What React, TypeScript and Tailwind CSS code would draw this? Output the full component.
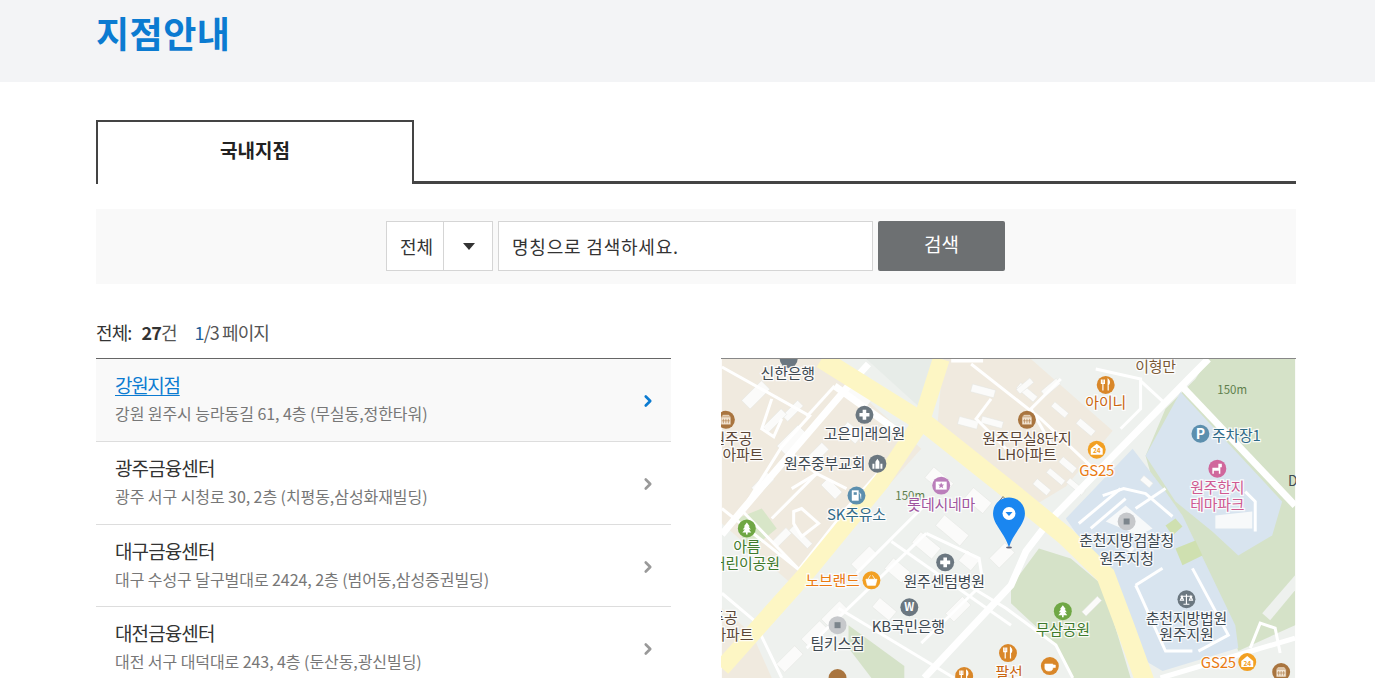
import { ChevronRight } from "lucide-react";

const branches = [
  { name: "강원지점", addr: "강원 원주시 능라동길 61, 4층 (무실동,정한타워)", active: true, h: "h-[83px]" },
  { name: "광주금융센터", addr: "광주 서구 시청로 30, 2층 (치평동,삼성화재빌딩)", active: false, h: "h-[83px]" },
  { name: "대구금융센터", addr: "대구 수성구 달구벌대로 2424, 2층 (범어동,삼성증권빌딩)", active: false, h: "h-[82px]" },
  { name: "대전금융센터", addr: "대전 서구 대덕대로 243, 4층 (둔산동,광신빌딩)", active: false, h: "h-[83px]" },
];

// [label, x, y, colour] in map coordinates
const labels: [string, number, number, string][] = [
  ["신한은행", 66, 20, "#3f4a52"],
  ["고은미래의원", 143, 80, "#3f4a52"],
  ["원주공", 10, 85, "#5b4636"],
  ["아파트", 21, 101, "#5b4636"],
  ["원주중부교회", 103, 110, "#3f4a52"],
  ["SK주유소", 135, 162, "#2f6a88"],
  ["롯데시네마", 220, 151, "#a0559f"],
  ["아름", 25, 194, "#3f7a2c"],
  ["어린이공원", 24, 211, "#3f7a2c"],
  ["노브랜드", 111, 228, "#ea7a12"],
  ["원주센텀병원", 223, 229, "#3f4a52"],
  ["KB국민은행", 187, 274, "#3f4a52"],
  ["주공", 2, 265, "#5b4636"],
  ["아파트", 11, 282, "#5b4636"],
  ["팀키스짐", 116, 291, "#3f4a52"],
  ["팔선", 288, 320, "#c9640e"],
  ["이형만", 435, 13, "#7a5a36"],
  ["아이니", 385, 49, "#c9640e"],
  ["원주무실8단지", 306, 85, "#5b4636"],
  ["LH아파트", 306, 101, "#5b4636"],
  ["GS25", 376, 117, "#ea7a12"],
  ["주차장1", 516, 82, "#2f6a88"],
  ["원주한지", 497, 134, "#cf5a92"],
  ["테마파크", 497, 151, "#cf5a92"],
  ["춘천지방검찰청", 406, 188, "#3f4a52"],
  ["원주지청", 406, 206, "#3f4a52"],
  ["무삼공원", 342, 277, "#3f7a2c"],
  ["춘천지방법원", 466, 266, "#3f4a52"],
  ["원주지원", 466, 282, "#3f4a52"],
  ["GS25", 498, 310, "#ea7a12"],
];

type Kind = "none" | "cross" | "grid" | "church" | "gas" | "star" | "tree" | "basket" | "won" | "dot" | "fork" | "store" | "p" | "horse" | "scale" | "cup";

// [x, y, colour, icon] round map markers
const markers: [number, number, string, Kind][] = [
  [67, 0, "#6b7780", "none"],
  [143, 56, "#6b7780", "cross"],
  [4, 61, "#a9753f", "grid"],
  [156, 105, "#6b7780", "church"],
  [135, 137, "#5c8fae", "gas"],
  [220, 127, "#bb7fbb", "star"],
  [25, 170, "#6fa744", "tree"],
  [150, 222, "#f2a023", "basket"],
  [224, 204, "#6b7780", "cross"],
  [188, 249, "#6b7780", "won"],
  [116, 267, "#c6c8cb", "dot"],
  [116, 320, "#a9753f", "none"],
  [243, 318, "#d98729", "fork"],
  [287, 295, "#d98729", "fork"],
  [385, 26, "#d98729", "fork"],
  [306, 61, "#a9753f", "grid"],
  [376, 91, "#f2a023", "store"],
  [480, 75, "#5c8fae", "p"],
  [497, 110, "#d0679c", "horse"],
  [406, 163, "#c6c8cb", "dot"],
  [342, 253, "#6fa744", "tree"],
  [466, 241, "#6b7780", "scale"],
  [329, 308, "#d98729", "cup"],
  [527, 304, "#f2a023", "store"],
  [561, 314, "#a9753f", "grid"],
];

function MarkerIcon({ kind }: { kind: Kind }) {
  const w = { fill: "none", stroke: "#fff", strokeWidth: 1.2 };
  switch (kind) {
    case "cross":
      return <path d="M-1.8 -5H1.8V-1.8H5V1.8H1.8V5H-1.8V1.8H-5V-1.8H-1.8Z" fill="#fff" />;
    case "grid":
      return <path d="M-5 -3H5V5H-5ZM-5 -3L-3 -5H3L5 -3M-2.5 -1V3.5M0 -1V3.5M2.5 -1V3.5M-4 1H4" fill="#f3e6d4" stroke="#a9753f" strokeWidth="0.6" />;
    case "church":
      return <path d="M-5 5V0H-3V5ZM-2 5V-2L0 -5L2 -2V5ZM3 5V0H5V5Z" fill="#fff" />;
    case "gas":
      return <path d="M-4.5 5V-5H2V5ZM-3 -3.5V-0.5H0.5V-3.5ZM3 -3L4.5 -1V3.5" fill="#fff" stroke="#fff" strokeWidth="0.4" fillRule="evenodd" />;
    case "star":
      return (
        <g>
          <rect x="-5.5" y="-4" width="11" height="8" fill="#fff" />
          <path d="M0 -3L1 -1H3L1.4 0.4L2 2.6L0 1.3L-2 2.6L-1.4 0.4L-3 -1H-1Z" fill="#bb7fbb" />
        </g>
      );
    case "tree":
      return <path d="M0 -6L3 -2H1.8L4 1H2L4.5 4H0.8V6H-0.8V4H-4.5L-2 1H-4L-1.8 -2H-3Z" fill="#fff" />;
    case "basket":
      return <path d="M-5.5 -1H5.5L4 5H-4ZM-3.5 -1L-1 -5M3.5 -1L1 -5" fill="#fff" stroke="#fff" strokeWidth="0.8" />;
    case "won":
      return <text y="4" textAnchor="middle" fontSize="11" fontWeight="700" fill="#fff">W</text>;
    case "dot":
      return <rect x="-3" y="-3" width="6" height="6" fill="#7c858c" />;
    case "fork":
      return <path d="M-2.8 -5.5V5.5M-4.3 -5.5V-1.5H-1.3V-5.5M2.5 5.5V-5.5C4.2 -4 4.2 -1 2.5 0" {...w} />;
    case "store":
      return (
        <g>
          <path d="M-6 -1L0 -6L6 -1V5H-6Z" fill="#fff" />
          <text y="3.5" textAnchor="middle" fontSize="6.5" fontWeight="700" fill="#f2a023">24</text>
        </g>
      );
    case "p":
      return <text y="5" textAnchor="middle" fontSize="14" fontWeight="700" fill="#fff">P</text>;
    case "horse":
      return <path d="M-5 5V-1H1V-5H4.5V-1.5H3V5H1.5V2H-3.5V5Z" fill="#fff" />;
    case "scale":
      return <path d="M-6 -3H6M0 -5V5M-3 5H3M-4.5 -3L-6 1H-3ZM4.5 -3L3 1H6Z" {...w} />;
    case "cup":
      return <path d="M-5 -2H3V2C3 4 1.5 5 -1 5C-3.5 5 -5 4 -5 2ZM3 -1H5.5V1.5H3" fill="#fff" stroke="#fff" strokeWidth="0.6" />;
    default:
      return null;
  }
}

const whiteRoads = [
  "M0 176 L20 152 L127 27 L147 5",
  "M113 27 L187 80",
  "M203 320 L290 227 L305 193 L328 163 L468 20 L488 0",
  "M462 28 L575 147",
  "M262 0 L230 0",
];

const thinRoads = [
  "M0 8 L88 57 L60 88 L20 152",
  "M20 152 L78 212 L0 150",
  "M113 27 L85 58",
  "M187 80 L125 150 L78 210",
  "M170 183 L290 267",
  "M117 250 L233 320",
  "M135 215 L205 145",
  "M85 290 L205 175",
  "M205 175 L258 200 L262 225 L200 285",
  "M247 227 L285 250 L335 287 L352 320",
  "M0 235 L32 262 L60 320",
  "M250 5 L320 60 L378 115",
  "M340 20 L310 50 L330 85",
  "M375 10 L420 20 L420 50 L400 70",
  "M420 22 L445 45",
  "M270 40 L255 60 L285 90",
  "M50 160 L95 115 L125 130",
  "M70 130 L95 115 L70 95",
  "M72 153 L80 150 L97 165 L80 178 L72 165Z",
  "M50 40 L40 70 L52 78 L60 60",
  "M382 137 L403 130 L425 135 L452 158",
  "M358 165 L400 130",
  "M370 170 L405 140",
  "M415 150 L445 130",
  "M415 227 L442 210",
  "M415 227 L418 233 L445 293 L472 293",
  "M472 210 L508 277 L478 293",
  "M525 133 L535 143 L535 173",
  "M530 290 L540 265 L555 270 L560 295",
];

const buildings: [number, number, number, number, number][] = [
  [20, 30, 28, 12, -45], [55, 75, 30, 12, -45], [30, 120, 22, 10, -45], [85, 90, 22, 10, -45],
  [60, 48, 22, 8, -45], [40, 58, 26, 8, -45], [125, 30, 26, 12, 40], [120, 68, 20, 12, 40],
  [205, 115, 26, 14, 40], [215, 165, 32, 14, 40], [192, 180, 26, 14, 40], [152, 245, 22, 12, 40],
  [165, 205, 22, 14, 40], [130, 195, 26, 12, -45], [100, 250, 26, 12, -45], [80, 270, 26, 12, -45],
  [55, 295, 26, 12, -45], [245, 135, 24, 14, 40], [270, 190, 22, 14, -45], [225, 245, 24, 12, -45],
  [240, 195, 16, 14, 40], [100, 125, 20, 10, 45], [120, 145, 24, 8, -45], [50, 175, 20, 8, -45],
  [295, 30, 22, 7, 40], [345, 125, 20, 6, 40], [325, 115, 20, 6, 40], [330, 48, 18, 6, 40],
  [260, 60, 22, 7, 15], [320, 25, 20, 7, -40], [355, 65, 20, 7, 40], [420, 120, 12, 6, 40],
  [400, 185, 14, 6, 40], [360, 245, 22, 6, -45], [250, 28, 24, 8, 15], [237, 60, 20, 8, 15],
  [338, 103, 18, 7, 40], [312, 125, 18, 7, 40], [295, 24, 18, 6, -40], [66, 175, 26, 7, 45],
];

function MapView() {
  return (
    <svg viewBox="0 0 575 320" className="block h-full w-full" style={{ fontFamily: "'Noto Sans CJK KR', sans-serif" }}>
      <rect width="575" height="320" fill="#eef1ee" />
      {/* land use */}
      <path d="M0 0H100L200 90L75 230L0 165Z" fill="#f0eadf" />
      <path d="M0 250L30 275L50 320H0Z" fill="#f0eadf" />
      <path d="M222 0H310L392 72L345 128L300 155L215 80Z" fill="#f0eadf" />
      <path d="M145 0H216L200 50Z" fill="#e7ece8" />
      <path d="M475 20L488 0H575V267L518 293L495 230L440 150L425 97L445 50Z" fill="#d5e2c8" />
      <path d="M290 228L318 190L350 200L382 227L410 320H352L335 287L290 245Z" fill="#d5e2c8" />
      <path d="M412 90L345 160L385 217L420 300L442 313L518 290L515 267L462 157L445 133Z" fill="#d8e4ef" />
      <path d="M460 33L425 97L455 143L492 173L518 197L552 177L562 143Z" fill="#d8e4ef" />
      <path d="M127 267L183 308V320H150L127 290Z" fill="#d5e2c8" />
      <path d="M15 160L40 150L55 170L25 195Z" fill="#d8e6c8" />
      {/* buildings */}
      {buildings.map(([x, y, w, h, r], i) => (
        <rect key={i} x={x} y={y} width={w} height={h} fill="#fbfbfa" stroke="#e3e5e1" strokeWidth="0.5" transform={`rotate(${r} ${x + w / 2} ${y + h / 2})`} />
      ))}
      <path d="M495 157L532 153L532 170L495 170Z" fill="#f7f9fa" />
      <path d="M385 163L405 147L432 170L418 177Z" fill="#f7f9fa" />
      <path d="M445 167L455 160L462 168L452 177Z" fill="#cfe0b0" />
      <path d="M455 190L475 182L482 197L462 207Z" fill="#cfe0b0" />
      <path d="M542 255L575 217V232L550 262Z" fill="#eef1ee" />
      {/* roads */}
      {thinRoads.map((d) => (
        <path key={d} d={d} fill="none" stroke="#fff" strokeWidth="3" />
      ))}
      {whiteRoads.map((d) => (
        <path key={d} d={d} fill="none" stroke="#fff" strokeWidth="7" />
      ))}
      <path d="M440 320L575 280" fill="none" stroke="#fff" strokeWidth="5" />
      <path d="M0 310L83 217L160 123L200 63L220 0" fill="none" stroke="#fdf6c4" strokeWidth="17" />
      <path d="M100 0L207 67L290 133L345 178L385 217L405 270L425 325" fill="none" stroke="#fdf6c4" strokeWidth="19" />
      {/* markers */}
      {markers.map(([x, y, c, k], i) => (
        <g key={i} transform={`translate(${x} ${y})`}>
          <circle r="9" fill={c} />
          <MarkerIcon kind={k} />
        </g>
      ))}
      {/* labels */}
      <text x="174" y="141" fontSize="11.5" fill="#5f7f4c">150m</text>
      <text x="497" y="35" fontSize="11.5" fill="#5f7f4c">150m</text>
      <text x="568" y="127" fontSize="14" fill="#3f4a52">D</text>
      {labels.map(([t, x, y, c], i) => (
        <text key={i} x={x} y={y} textAnchor="middle" fontSize="15" letterSpacing="-0.2" fill={c} stroke="#fff" strokeWidth="2.5" strokeOpacity="0.85" style={{ paintOrder: "stroke" }}>{t}</text>
      ))}
      {/* pin */}
      <path d="M278 143L282 138L290 146L298 150" fill="none" stroke="#555" strokeWidth="0.8" />
      <path d="M288 189C284 175 272 166 272 155C272 146 279 139 288 139C297 139 304 146 304 155C304 166 292 175 288 189Z" fill="#1a86f0" />
      <circle cx="288" cy="155" r="6.5" fill="#fff" />
      <path d="M284.5 153.5H291.5L288 157.5Z" fill="#1a86f0" />
      <ellipse cx="288" cy="189" rx="3" ry="1" fill="#667" />
    </svg>
  );
}

export default function App() {
  return (
    <div className="h-[678px] overflow-hidden bg-white font-['Noto_Sans_CJK_KR',sans-serif] text-[#333]">
      <header className="h-[82px] bg-[#f3f4f6] pl-[96px]">
        <h1 className="pt-[6px] text-[36px] font-bold leading-[52px] tracking-[0.5px] text-[#0b7bd1]">지점안내</h1>
      </header>

      <main className="ml-[96px] w-[1200px]">
        {/* tabs */}
        <div className="mt-[38px] flex h-[64px] border-b-[3px] border-[#444]">
          <div className="-mb-[3px] flex h-[64px] w-[318px] items-center justify-center border-x-2 border-t-2 border-[#444] bg-white pb-[6px] text-[19px] font-bold text-[#222]">
            국내지점
          </div>
        </div>

        {/* search */}
        <div className="mt-[25px] flex h-[75px] items-start justify-center bg-[#f9f9f9] pr-px pt-[12px] text-[18px] tracking-[0.8px] text-[#333]">
          <div className="flex h-[50px] w-[107px] border border-[#d5d5d5] bg-white">
            <span className="flex w-[57px] items-center justify-center border-r border-[#d5d5d5] pl-[3px] tracking-normal">전체</span>
            <span className="flex flex-1 items-center justify-center pl-[2px]">
              <span className="h-0 w-0 border-x-[6px] border-t-[7px] border-x-transparent border-t-[#333]" />
            </span>
          </div>
          <div className="ml-[5px] flex h-[50px] w-[375px] items-center border border-[#d5d5d5] bg-white pl-[13px]">
            명칭으로 검색하세요.
          </div>
          <button className="ml-[5px] h-[50px] w-[127px] rounded-[2px] bg-[#6d7072] pb-[4px] text-[19px] tracking-normal text-white">검색</button>
        </div>

        {/* count */}
        <div className="mt-[33px] flex h-[30px] items-center text-[18px] tracking-[-0.9px] text-[#555]">
          <span className="text-[#333]">전체:</span>
          <span className="ml-[10px] font-bold text-[#333]">27</span>
          <span>건</span>
          <span className="ml-[18px] text-[#1f5f9a]">1</span>
          <span>/3 페이지</span>
        </div>

        <div className="mt-[11px] flex items-start justify-between">
          <ul className="w-[575px] border-t border-[#666]">
            {branches.map((b) => (
              <li
                key={b.name}
                className={`flex items-center justify-between border-b border-[#ddd] pb-[4px] pl-[19px] pr-[14px] ${b.h} ${b.active ? "bg-[#f9f9f9]" : "bg-white"}`}
              >
                <div>
                  <div className={`text-[19px] leading-[30px] ${b.active ? "tracking-[-1.3px] text-[#0b7bd1] underline underline-offset-2" : "tracking-[-0.9px] text-[#333]"}`}>
                    {b.name}
                  </div>
                  <div className="text-[16px] leading-[26px] tracking-[-0.07px] text-[#777]">{b.addr}</div>
                </div>
                <ChevronRight className={`mt-[6px] h-[18px] w-[18px] ${b.active ? "text-[#0b7bd1]" : "text-[#999]"}`} strokeWidth={3.5} />
              </li>
            ))}
          </ul>
          <div className="h-[320px] w-[575px] border-t border-[#888]">
            <MapView />
          </div>
        </div>
      </main>
    </div>
  );
}
